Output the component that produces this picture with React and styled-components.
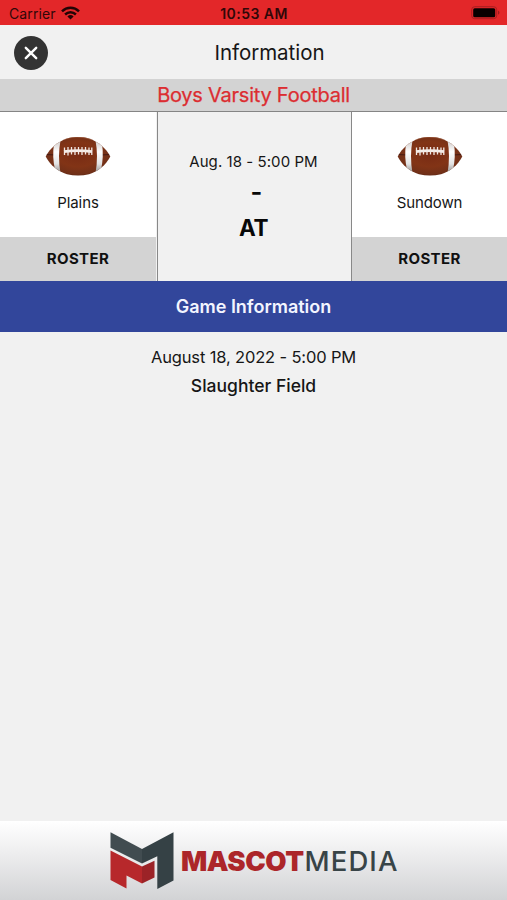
import React from "react";
import styled, { createGlobalStyle } from "styled-components";

const GlobalStyle = createGlobalStyle`
  * { box-sizing: border-box; }
  body { margin: 0; background: #f1f1f1; }
`;

const Screen = styled.main`
  width: 507px;
  height: 900px;
  display: flex;
  flex-direction: column;
  overflow: hidden;
  background: #f1f1f1;
  color: #161616;
  font-family: Inter, "Liberation Sans", sans-serif;
`;

const StatusBar = styled.div`
  height: 25px;
  flex: none;
  display: grid;
  grid-template-columns: 1fr auto 1fr;
  align-items: center;
  padding: 3px 7px 0 9px;
  background: #e32729;
  color: #300708;
`;

const Carrier = styled.div`
  display: flex;
  align-items: center;
  gap: 5px;
  font-size: 14px;
  line-height: 20px;
  letter-spacing: 0.1px;
`;

const Clock = styled.div`
  margin-right: 1px;
  font-size: 14px;
  line-height: 20px;
  font-weight: 600;
  letter-spacing: 0.45px;
`;

const WifiMark = styled.svg`
  margin-top: -2px;
`;

const BatteryIcon = styled.svg`
  justify-self: end;
  margin-top: -2px;
`;

const NavBar = styled.header`
  height: 54px;
  flex: none;
  display: grid;
  grid-template-columns: 48px 1fr 48px;
  align-items: center;
  padding: 1px 14px 0;
`;

const CloseButton = styled.button`
  width: 34px;
  height: 34px;
  padding: 0;
  border: 0;
  border-radius: 50%;
  background: #333;
  display: grid;
  place-items: center;
`;

const Title = styled.h1`
  margin: 1px 0 0 32px;
  text-align: center;
  font-size: 20.5px;
  line-height: 26px;
  font-weight: 400;
  letter-spacing: -0.05px;
`;

const SportBanner = styled.div`
  height: 33px;
  flex: none;
  border-bottom: 1px solid #858585;
  background: #d3d3d3;
  color: #dc2d31;
  text-align: center;
  font-size: 20px;
  line-height: 32px;
  letter-spacing: -0.24px;
  -webkit-text-stroke: 0.25px #dc2d31;
`;

const Matchup = styled.section`
  height: 169px;
  flex: none;
  display: grid;
  grid-template-columns: 156px 1fr 155px;
`;

const Team = styled.div`
  display: flex;
  flex-direction: column;
  align-items: center;
  background: #fff;
`;

const Football = styled.svg`
  margin-top: 24px;
  flex: none;
`;

const TeamName = styled.div`
  margin-top: 15.5px;
  font-size: 15px;
  line-height: 20px;
  letter-spacing: -0.1px;
`;

const RosterButton = styled.button`
  margin-top: auto;
  width: 100%;
  height: 44px;
  padding: 0;
  border: 0;
  background: #d3d3d3;
  color: #101010;
  font: 700 15px/44px Inter, "Liberation Sans", sans-serif;
  letter-spacing: 0.4px;
`;

const Score = styled.div`
  border: solid #888;
  border-width: 0 1px;
  margin-left: 1px;
  display: flex;
  flex-direction: column;
  align-items: center;
  padding-top: 40px;
`;

const GameTime = styled.div`
  margin-right: 2px;
  font-size: 15px;
  line-height: 20px;
  letter-spacing: 0.06px;
`;

const ScoreText = styled.div`
  margin-right: 2px;
  font-size: 22.5px;
  line-height: 28px;
  font-weight: 700;
  letter-spacing: -0.5px;
  color: #080808;
`;

const ScoreDash = styled(ScoreText)`
  margin: 6px 0 8px 3px;
  transform: scaleX(1.12);
`;

const SectionHeading = styled.h2`
  margin: 0;
  height: 51px;
  flex: none;
  background: #32469b;
  color: #f3f5ff;
  text-align: center;
  font-size: 18px;
  line-height: 52px;
  font-weight: 600;
`;

const Details = styled.section`
  flex: 1;
  padding-top: 11px;
  text-align: center;
`;

const DetailLine = styled.div`
  font-size: 16.5px;
  line-height: 28px;
  letter-spacing: -0.15px;
`;

const VenueLine = styled.div`
  font-size: 17.5px;
  line-height: 29px;
  font-weight: 500;
`;

const Sponsor = styled.footer`
  height: 79px;
  flex: none;
  display: flex;
  align-items: center;
  gap: 7px;
  padding-left: 110px;
  background: linear-gradient(#fff 0%, #ededee 42%, #d2d3d5 100%);
`;

const Wordmark = styled.div`
  display: flex;
  align-items: baseline;
  gap: 1px;
  font-size: 27.5px;
  line-height: 34px;
  font-weight: 500;
  letter-spacing: 1.1px;
  color: #384447;
`;

const WordmarkStrong = styled.span`
  color: #ac262a;
  font-weight: 900;
  letter-spacing: -0.5px;
`;

const teams = ["Plains", "Sundown"];

function WifiIcon() {
  return (
    <WifiMark width="19" height="14" viewBox="0 0 19 14" fill="none" stroke="#230405" strokeWidth="2.5">
      <path d="M1 5.3C5.8.7 13.2.7 18 5.3" />
      <path d="M4.1 8.5C7.2 5.6 11.8 5.6 14.9 8.5" />
      <path d="M9.5 13.4 6.4 10.4Q9.5 7.8 12.6 10.4Z" fill="#230405" stroke="none" />
    </WifiMark>
  );
}

function FootballIcon({ id }) {
  return (
    <Football width="66" height="41" viewBox="0 0 66 41">
      <defs>
        <radialGradient id={`${id}-leather`} cx=".5" cy=".45" r=".6">
          <stop offset="0" stopColor="#782b14" />
          <stop offset=".5" stopColor="#823416" />
          <stop offset=".8" stopColor="#713018" />
          <stop offset="1" stopColor="#42180e" />
        </radialGradient>
        <linearGradient id={`${id}-band`} x1="0" y1="0" x2="0" y2="1">
          <stop offset="0" stopColor="#cfcac8" />
          <stop offset=".35" stopColor="#fff" />
          <stop offset=".72" stopColor="#e2e2e2" />
          <stop offset="1" stopColor="#918d8b" />
        </linearGradient>
        <clipPath id={`${id}-ball`}>
          <path d="M.7 20.5C5 12 13 5.5 22 2.4 29 .5 37 .5 44 2.4 53 5.5 61 12 65.3 20.5 61 29 53 35.5 44 38.3 37 40 29 40 22 38.3 13 35.5 5 29 .7 20.5Z" />
        </clipPath>
      </defs>
      <g clipPath={`url(#${id}-ball)`}>
        <rect width="66" height="41" fill={`url(#${id}-leather)`} />
        <path d="M0 18.5 11 19M55 19 66 18.5" stroke="#461a12" />
        <path d="M9 8 15.5 4.5Q12.5 20 15.5 37L10 34Q7 20 9 8ZM57 8 50.5 4.5Q53.5 20 50.5 37L56 34Q59 20 57 8Z" fill={`url(#${id}-band)`} />
        <path d="M17 4Q31-2 49 4" fill="none" stroke="#a7694c" strokeWidth=".7" />
      </g>
      <path d="M19 15.7Q33 13.7 47 15.7" fill="none" stroke="#f5eee9" strokeWidth="2.7" />
      <path d="M19.5 11.5V19M23 11V19.5M26.5 11V18.5M30 11V19M33.5 11V18.5M37 11V19M40.5 11V18.5M44 11.5V19M46.8 11.5V19" stroke="#f2e9e4" strokeWidth="1.3" />
    </Football>
  );
}

function TeamCard({ name }) {
  return (
    <Team>
      <FootballIcon id={name} />
      <TeamName>{name}</TeamName>
      <RosterButton>ROSTER</RosterButton>
    </Team>
  );
}

export default function App() {
  return (
    <Screen>
      <GlobalStyle />
      <StatusBar>
        <Carrier>Carrier <WifiIcon /></Carrier>
        <Clock>10:53 AM</Clock>
        <BatteryIcon width="29" height="14" viewBox="0 0 29 14">
          <rect x=".7" y=".7" width="25" height="12" rx="3" fill="none" stroke="#a91e20" />
          <rect x="2.2" y="2.2" width="22" height="9" rx="1.5" fill="#080000" />
          <path d="M27 4.6Q30 6.7 27 8.8Z" fill="#9d1c1d" />
        </BatteryIcon>
      </StatusBar>
      <NavBar>
        <CloseButton aria-label="Close">
          <svg width="14" height="14" viewBox="0 0 14 14" stroke="#fff" strokeWidth="2.4" strokeLinecap="round">
            <path d="M1.8 1.8 12.2 12.2M12.2 1.8 1.8 12.2" />
          </svg>
        </CloseButton>
        <Title>Information</Title>
      </NavBar>
      <SportBanner>Boys Varsity Football</SportBanner>
      <Matchup>
        <TeamCard name={teams[0]} />
        <Score>
          <GameTime>Aug. 18 - 5:00 PM</GameTime>
          <ScoreDash>-</ScoreDash>
          <ScoreText>AT</ScoreText>
        </Score>
        <TeamCard name={teams[1]} />
      </Matchup>
      <SectionHeading>Game Information</SectionHeading>
      <Details>
        <DetailLine>August 18, 2022 - 5:00 PM</DetailLine>
        <VenueLine>Slaughter Field</VenueLine>
      </Details>
      <Sponsor>
        <svg width="64" height="58" viewBox="0 0 64 58">
          <path d="M.5.3 32 17V31.5L.5 15.8Z" fill="#414c50" />
          <path d="M32 17 63.5.3V48.5L47.3 57V24.2L32 31.5Z" fill="#354145" />
          <path d="M.5 18.5 32 34.5V51.5L16.5 43.5V56.5L.5 48Z" fill="#b7282b" />
          <path d="M32 34.5 44.5 28.8V45.5L32 51.5Z" fill="#9c2327" />
        </svg>
        <Wordmark><WordmarkStrong>MASCOT</WordmarkStrong>MEDIA</Wordmark>
      </Sponsor>
    </Screen>
  );
}
